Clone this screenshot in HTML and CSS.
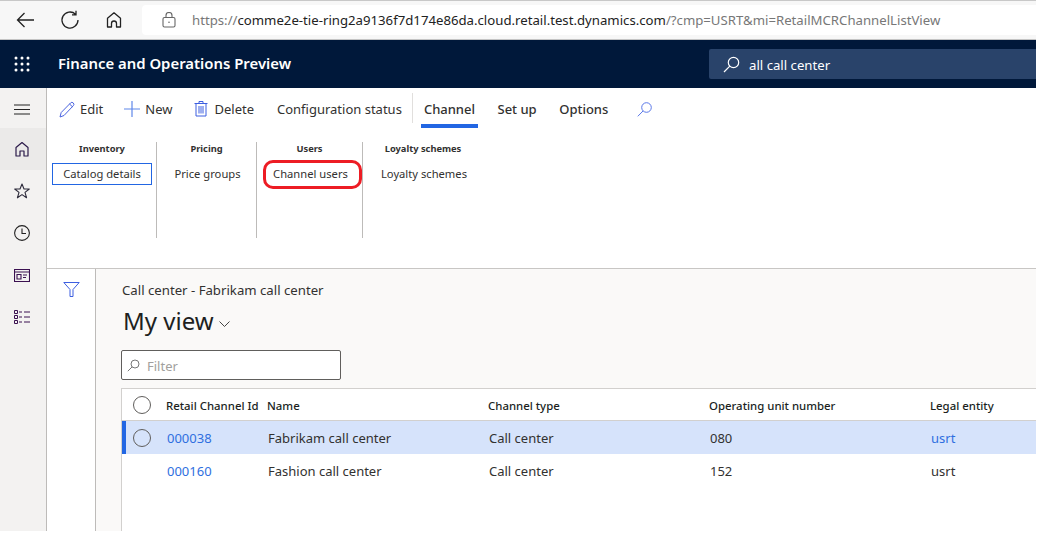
FILE: index.html
```html
<!DOCTYPE html>
<html lang="en">

<head>
  <meta charset="UTF-8">
  <title>Finance and Operations Preview</title>
  <link rel="stylesheet" href="styles.css">
</head>

<body>
  <div class="app">
    <div class="browser-bar">
      <svg class="b-icon back" width="22" height="22" viewBox="0 0 22 22" fill="none" stroke="#222" stroke-width="1.3"><path d="M19 11H2.500M9.500 4 2.500 11l7 7"/></svg>
      <svg class="b-icon reload" width="20" height="20" viewBox="0 0 20 20" fill="none" stroke="#222" stroke-width="1.3"><path d="M15.500 4.200A8 8 0 1 0 18 10M16 .8v4h-4"/></svg>
      <svg class="b-icon home" width="18" height="18" viewBox="0 0 18 18" fill="none" stroke="#222" stroke-width="1.3"><path d="M2.500 16V7.300L9 1.800l6.500 5.500V16h-4v-3.500a2.500 2.500 0 0 0-5 0V16Z" stroke-linejoin="round"/></svg>
      <div class="address">
        <svg width="14" height="16" viewBox="0 0 14 16" fill="none" stroke="#666" stroke-width="1.1"><rect x="1" y="5.500" width="12" height="9.500" rx="1.500"/><path d="M4 5.500V3.500a3 3 0 0 1 6 0v2"/><circle cx="7" cy="10.300" r=".8" fill="#666" stroke="none"/></svg>
        <span class="url"><span class="url-dim">https://</span>comme2e-tie-ring2a9136f7d174e86da.cloud.retail.test.dynamics.com<span class="url-dim">/?cmp=USRT&amp;mi=RetailMCRChannelListView</span></span>
      </div>
    </div>

    <header class="nav-bar">
      <svg class="waffle" width="16" height="16" viewBox="0 0 16 16" fill="#fff"><circle cx="2" cy="2" r="1.500"/><circle cx="8" cy="2" r="1.500"/><circle cx="14" cy="2" r="1.500"/><circle cx="2" cy="8" r="1.500"/><circle cx="8" cy="8" r="1.500"/><circle cx="14" cy="8" r="1.500"/><circle cx="2" cy="14" r="1.500"/><circle cx="8" cy="14" r="1.500"/><circle cx="14" cy="14" r="1.500"/></svg>
      <div class="app-title">Finance and Operations Preview</div>
      <div class="search">
        <svg width="17" height="17" viewBox="0 0 17 17" fill="none" stroke="#fff" stroke-width="1.200"><circle cx="10.500" cy="6.500" r="5.200"/><path d="M6.800 10.200 1 16"/></svg>
        <span class="search-text">all call center</span>
      </div>
    </header>

    <div class="body">
      <nav class="rail">
        <div class="rail-item rail-menu">
          <svg width="16" height="11" viewBox="0 0 16 11" stroke="#222" stroke-width="1.100"><path d="M0 1h16M0 5.500h16M0 10h16"/></svg>
        </div>
        <div class="rail-item rail-active">
          <svg width="16" height="16" viewBox="0 0 16 16" fill="none" stroke="#2b1a4a" stroke-width="1.200"><path d="M2 15V6.500L8 1.500l6 5V15h-4v-5H6v5Z" stroke-linejoin="round"/></svg>
        </div>
        <div class="rail-item">
          <svg width="16" height="16" viewBox="0 0 16 16" fill="none" stroke="#2b2a3a" stroke-width="1.100"><path d="m8 1 2 5h5.300l-4.300 3.400 1.600 5.400L8 11.600l-4.600 3.200L5 9.400.7 6H6Z" stroke-linejoin="round"/></svg>
        </div>
        <div class="rail-item">
          <svg width="16" height="16" viewBox="0 0 16 16" fill="none" stroke="#222" stroke-width="1.100"><circle cx="8" cy="8" r="7.400"/><path d="M8 3.500V8.500h4"/></svg>
        </div>
        <div class="rail-item">
          <svg width="16" height="13" viewBox="0 0 16 13" fill="none" stroke="#3a1050" stroke-width="1.100"><path d="M.5.500h15v12H.5ZM.5 3h15M3 5.500h4v4.500H3ZM9 6h4M9 8.500h3"/></svg>
        </div>
        <div class="rail-item">
          <svg width="16" height="14" viewBox="0 0 16 14" fill="none" stroke="#3a1050" stroke-width="1"><path d="M.5.500h3v3h-3ZM.5 5.500h3v3h-3ZM.5 10.500h3v3h-3ZM5 2h3M10 2h6M5 7h3M10 7h6M5 12h3M10 12h6"/></svg>
        </div>
      </nav>

      <main class="workspace">
        <div class="action-pane">
          <div class="actions">
            <button class="action">
              <svg width="16" height="17" viewBox="0 0 16 17" fill="none" stroke="#4a63e0" stroke-width="1"><path d="M1 16l1.200-4.500L11.500 2a1.900 1.900 0 0 1 2.800 2.700L5 14.500Z" stroke-linejoin="round"/><path d="m10.500 3 3 2.800"/></svg>
              Edit
            </button>
            <button class="action action-new">
              <svg width="16" height="16" viewBox="0 0 16 16" stroke="#5f88ea" stroke-width="1.200"><path d="M8 0v16M0 8h16"/></svg>
              New
            </button>
            <button class="action action-delete">
              <svg width="14" height="16" viewBox="0 0 14 16" fill="none" stroke="#3d5fe0" stroke-width="1"><path d="M.5 2.500h13M2 2.500v12.500h10V2.500M5 2.500V.5h4v2M5 5v7.500M7 5v7.500M9 5v7.500"/></svg>
              Delete
            </button>
            <button class="action">Configuration status</button>
            <div class="tabs">
              <button class="tab tab-active">Channel</button>
              <button class="tab">Set up</button>
              <button class="tab">Options</button>
            </div>
            <svg class="action-search" width="15" height="15" viewBox="0 0 15 15" fill="none" stroke="#5a78e8" stroke-width="1"><circle cx="9.500" cy="5.500" r="4.800"/><path d="M6 9 .8 14.300"/></svg>
          </div>

          <div class="ribbon">
            <section class="group group-inventory">
              <h3>Inventory</h3>
              <button class="ribbon-btn ribbon-focus">Catalog details</button>
            </section>
            <section class="group group-pricing">
              <h3>Pricing</h3>
              <button class="ribbon-btn">Price groups</button>
            </section>
            <section class="group group-users">
              <h3>Users</h3>
              <button class="ribbon-btn ribbon-marked">Channel users</button>
            </section>
            <section class="group group-loyalty">
              <h3>Loyalty schemes</h3>
              <button class="ribbon-btn">Loyalty schemes</button>
            </section>
          </div>
        </div>

        <div class="page">
          <aside class="filter-col">
            <svg width="17" height="15" viewBox="0 0 17 15" fill="none" stroke="#3d5fe0" stroke-width="1"><path d="M.8.500h15.400L10 7.500v7H7v-7Z" stroke-linejoin="round"/></svg>
          </aside>
          <div class="content">
            <div class="crumb">Call center - Fabrikam call center</div>
            <h1 class="view-title">My view
              <svg width="11" height="6" viewBox="0 0 11 6" fill="none" stroke="#444" stroke-width="1"><path d="m.5.500 5 5 5-5"/></svg>
            </h1>
            <div class="filter-box">
              <svg width="13" height="13" viewBox="0 0 13 13" fill="none" stroke="#777" stroke-width="1"><circle cx="8" cy="5" r="4"/><path d="M5.200 7.800.8 12.200"/></svg>
              <span class="filter-text">Filter</span>
            </div>
            <div class="grid">
              <div class="row row-head">
                <span class="check"></span>
                <span class="cell col-id">Retail Channel Id</span>
                <span class="cell col-name">Name</span>
                <span class="cell col-type">Channel type</span>
                <span class="cell col-unit">Operating unit number</span>
                <span class="cell col-entity">Legal entity</span>
              </div>
              <div class="row row-selected">
                <span class="check"></span>
                <a class="cell col-id">000038</a>
                <span class="cell col-name">Fabrikam call center</span>
                <span class="cell col-type">Call center</span>
                <span class="cell col-unit">080</span>
                <a class="cell col-entity">usrt</a>
              </div>
              <div class="row">
                <span class="check check-hidden"></span>
                <a class="cell col-id">000160</a>
                <span class="cell col-name">Fashion call center</span>
                <span class="cell col-type">Call center</span>
                <span class="cell col-unit">152</span>
                <span class="cell col-entity">usrt</span>
              </div>
            </div>
          </div>
        </div>
      </main>
    </div>
  </div>
</body>

</html>
```

FILE: styles.css
```css
* {
  margin: 0;
  box-sizing: border-box;
}

html,
body {
  height: 100%;
  overflow: hidden;
}

body {
  font-family: "Noto Sans", "Open Sans", sans-serif;
  font-size: 13px;
  color: #323130;
  background: #fff;
}

button {
  font: inherit;
  color: inherit;
  background: none;
  border: 0;
  padding: 0;
}

.app {
  width: 1036px;
  height: 531px;
  display: flex;
  flex-direction: column;
}

/* browser chrome */
.browser-bar {
  flex: 0 0 40px;
  display: flex;
  align-items: center;
  background: #f7f7f7;
  border-top: 1px solid #c8c8c8;
  border-bottom: 1px solid #c4c4c4;
  padding-left: 15px;
}

.b-icon {
  flex: none;
}

.reload {
  margin-left: 23px;
}

.home {
  margin-left: 25px;
}

.address {
  flex: 1;
  height: 30px;
  margin-left: 19px;
  padding-left: 20px;
  display: flex;
  align-items: center;
  gap: 16px;
  background: #fff;
  border-radius: 4px 0 0 4px;
}

.url {
  font-size: 13.2px;
  color: #222;
  white-space: nowrap;
}

.url-dim {
  color: #777;
}

/* navy bar */
.nav-bar {
  flex: 0 0 48px;
  display: flex;
  align-items: center;
  background: #00183a;
  color: #fff;
  padding-left: 14px;
}

.app-title {
  margin-left: 28px;
  padding-bottom: 2px;
  font-size: 14.9px;
  font-weight: 600;
}

.search {
  margin-left: auto;
  width: 327px;
  height: 30px;
  display: flex;
  align-items: center;
  gap: 9px;
  padding-left: 14px;
  background: #29436a;
  border-radius: 2px 0 0 2px;
  font-size: 13.2px;
}

.search-text {
  padding-top: 1px;
}

.body {
  flex: 1;
  display: flex;
  min-height: 0;
}

/* left rail */
.rail {
  flex: 0 0 47px;
  background: #f3f2f1;
  border-right: 1px solid #bdbbb9;
}

.rail-item {
  height: 42px;
  display: flex;
  align-items: center;
  justify-content: center;
  padding-right: 2px;
}

.rail-menu {
  height: 40px;
  padding-top: 2px;
}

.rail-active {
  background: #ebeae9;
}

.workspace {
  flex: 1;
  display: flex;
  flex-direction: column;
  min-width: 0;
}

.action-pane {
  flex: 0 0 181px;
  border-bottom: 1px solid #c8c6c4;
}

/* action row */
.actions {
  height: 42px;
  display: flex;
  align-items: center;
  padding-left: 12px;
  font-size: 13px;
}

.action {
  display: flex;
  align-items: center;
  gap: 5px;
  margin-right: 21px;
}

.action-new {
  margin-right: 22px;
}

.action-delete {
  gap: 6px;
  margin-right: 23px;
}

.tabs {
  align-self: flex-start;
  display: flex;
  height: 30px;
  gap: 22.5px;
  margin: 5px 0 0 -11px;
  padding-left: 11px;
  border-left: 1px solid #e1dfdd;
}

.tab {
  font-weight: 500;
  height: 35px;
  border-bottom: 4px solid transparent;
}

.tab-active {
  border-bottom-color: #2266e3;
  padding: 0 3px;
  margin: 0 -3px;
}

.action-search {
  margin-left: 29px;
}

/* ribbon */
.ribbon {
  display: flex;
  height: 98px;
  padding-top: 12px;
}

.group {
  height: 96px;
  display: flex;
  flex-direction: column;
  align-items: center;
  border-right: 1px solid #bdbbb9;
}

.group h3 {
  font-size: 9.3px;
  font-weight: 700;
  line-height: 14px;
  margin-bottom: 7px;
}

.group-inventory {
  width: 110px;
  padding-left: 1px;
}

.group-pricing {
  width: 100px;
}

.group-users {
  width: 106px;
}

.group-loyalty {
  width: 120px;
  border-right: 0;
}

.ribbon-btn {
  font-size: 11.2px;
  height: 22px;
  padding: 0 10px 1px;
  white-space: nowrap;
  border: 1px solid transparent;
}

.group + .group .ribbon-btn {
  margin-left: 2px;
}

.ribbon-focus {
  border-color: #2266e3;
}

.ribbon-marked {
  position: relative;
}

/* hand drawn highlight over the button */
.ribbon-marked::after {
  content: "";
  position: absolute;
  left: 0;
  right: -4px;
  top: -4px;
  bottom: -5px;
  border: 3px solid #ed1c24;
  border-radius: 10px;
}

/* page below the ribbon */
.page {
  flex: 1;
  display: flex;
  min-height: 0;
}

.filter-col {
  flex: 0 0 49px;
  padding: 13px 0 0 16px;
  border-right: 1px solid #bdbbb9;
}

.content {
  flex: 1;
  background: #faf9f8;
  padding: 12px 0 0 26px;
  display: flex;
  flex-direction: column;
  min-width: 0;
}

.crumb {
  font-size: 13.2px;
  line-height: 18px;
}

.view-title {
  font-size: 24px;
  font-weight: 400;
  line-height: 32px;
  color: #201f1e;
  margin-top: 6px;
  margin-left: 1px;
}

.view-title svg {
  vertical-align: 3px;
  margin-left: -1px;
}

.filter-box {
  width: 220px;
  height: 30px;
  margin-top: 13px;
  margin-left: -1px;
  display: flex;
  align-items: center;
  gap: 7px;
  padding-left: 5px;
  background: #fff;
  border: 1px solid #605e5c;
  border-radius: 2px;
  color: #a19f9d;
}

.filter-text {
  padding-top: 1px;
}

/* grid */
.grid {
  flex: 1;
  margin-top: 8px;
  margin-left: -1px;
  background: #fff;
  border: 1px solid #d2d0ce;
  border-width: 1px 0 0 1px;
}

.row {
  height: 33px;
  display: flex;
  align-items: center;
  padding-left: 11px;
}

.row-head {
  height: 32px;
  border-bottom: 1px solid #d2d0ce;
  font-size: 11.4px;
  font-weight: 500;
  color: #201f1e;
}

.row-head .check {
  margin-right: 15px;
}

.row-head .cell {
  padding-top: 2px;
}

.row-selected {
  background: #d6e3fb;
  box-shadow: inset 4px 0 0 #2266e3;
}

.row-selected a {
  color: #2b5fc4;
}

.check {
  flex: none;
  width: 18px;
  height: 18px;
  border: 1px solid #605e5c;
  border-radius: 50%;
  margin-right: 16px;
}

.check-hidden {
  visibility: hidden;
}

.cell {
  white-space: nowrap;
}

a.cell {
  color: #2f6fe0;
}

.col-id {
  width: 101px;
}

.col-name {
  width: 221px;
}

.col-type {
  width: 221px;
}

.col-unit {
  width: 221px;
}
```
